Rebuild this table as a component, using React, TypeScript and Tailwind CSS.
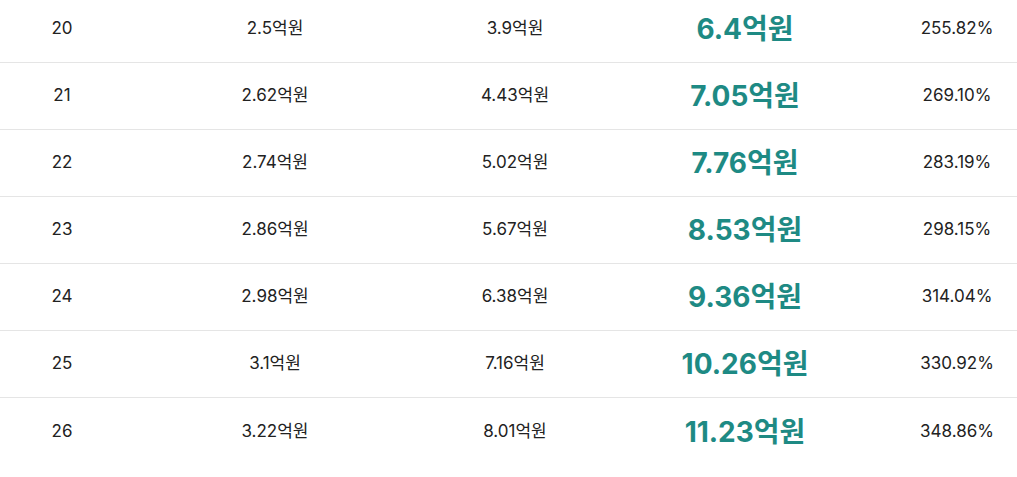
const rows = [
  { year: 20, principal: "2.5억원", interest: "3.9억원", total: "6.4억원", rate: "255.82%" },
  { year: 21, principal: "2.62억원", interest: "4.43억원", total: "7.05억원", rate: "269.10%" },
  { year: 22, principal: "2.74억원", interest: "5.02억원", total: "7.76억원", rate: "283.19%" },
  { year: 23, principal: "2.86억원", interest: "5.67억원", total: "8.53억원", rate: "298.15%" },
  { year: 24, principal: "2.98억원", interest: "6.38억원", total: "9.36억원", rate: "314.04%" },
  { year: 25, principal: "3.1억원", interest: "7.16억원", total: "10.26억원", rate: "330.92%" },
  { year: 26, principal: "3.22억원", interest: "8.01억원", total: "11.23억원", rate: "348.86%" },
];

export default function App() {
  return (
    <div
      className="w-full min-h-[477px] bg-white overflow-hidden text-[#222]"
      style={{ fontFamily: "Inter, 'Noto Sans CJK KR', sans-serif" }}
    >
      <div className="-mt-[4px]">
        {rows.map((row, i) => (
          <div
            key={row.year}
            className={`grid grid-cols-[124px_302px_178px_282px_1fr] items-center h-[67px] ${
              i < rows.length - 1 ? "border-b border-[#e5e5e5]" : ""
            }`}
          >
            <div className="text-center text-[17px]">{row.year}</div>
            <div className="text-center text-[17px]">{row.principal}</div>
            <div className="text-center text-[17px]">{row.interest}</div>
            <div className="text-center text-[28px] font-bold text-[#1e8a84]">{row.total}</div>
            <div className="text-center text-[17px] pl-[11px]">{row.rate}</div>
          </div>
        ))}
      </div>
    </div>
  );
}
